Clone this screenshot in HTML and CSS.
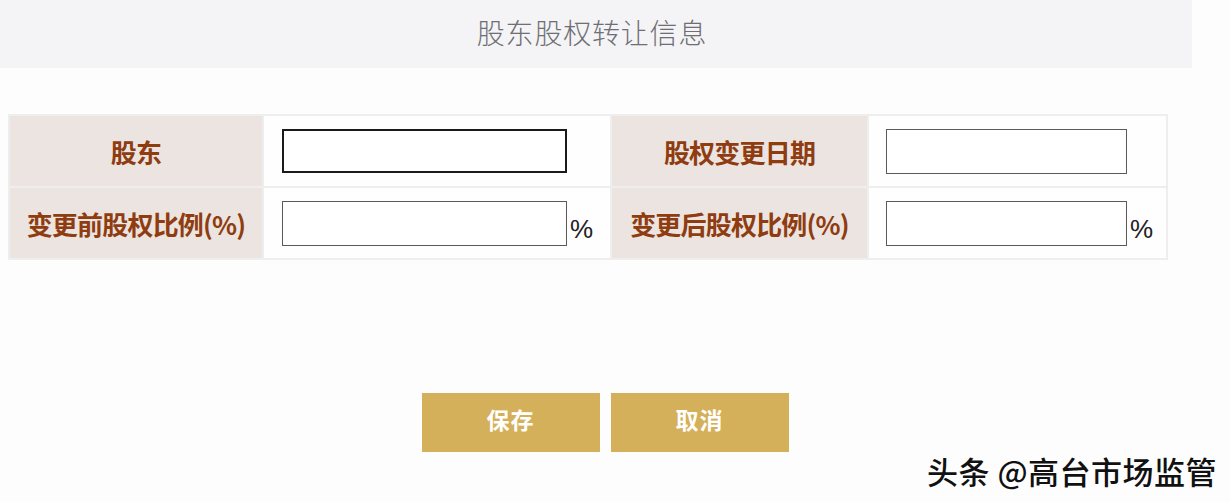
FILE: index.html
```html
<html>
<head>
  <meta charset="UTF-8">
  <meta name="viewport" content="width=device-width, initial-scale=1">
  <title>股东股权转让信息</title>
  <link rel="stylesheet" href="styles.css">
</head>
<body>
  <div class="page">
    <div class="title-bar">
      <h3>股东股权转让信息</h3>
    </div>

    <table class="info-table">
      <tr>
        <td class="label c1">股东</td>
        <td class="field c2"><input type="text" class="box focus"></td>
        <td class="label c3">股权变更日期</td>
        <td class="field c4"><input type="text" class="box short"></td>
      </tr>
      <tr>
        <td class="label">变更前股权比例(%)</td>
        <td class="field"><input type="text" class="box"><span class="unit">%</span></td>
        <td class="label">变更后股权比例(%)</td>
        <td class="field last"><input type="text" class="box short"><span class="unit">%</span></td>
      </tr>
    </table>

    <div class="actions">
      <button class="btn">保存</button>
      <button class="btn">取消</button>
    </div>
  </div>

  <!-- watermark over the screenshot -->
  <div class="watermark">头条 @高台市场监管</div>
</body>
</html>
```

FILE: styles.css
```css
body {
  margin: 0;
  padding: 0;
  background: #fdfdfd;
  font-family: "Noto Sans CJK SC", "Noto Sans", sans-serif;
  width: 1230px;
  height: 502px;
  overflow: hidden;
  position: relative;
}

.page {
  width: 1230px;
}

.title-bar {
  width: 1192px;
  height: 68px;
  background: #f4f4f6;
  display: flex;
  align-items: center;
  justify-content: center;
}
.title-bar h3 {
  margin: 0;
  padding: 0 8px 4px 0;
  font-size: 28px;
  font-weight: 300;
  color: #6e6e74;
  letter-spacing: 0.8px;
}

.info-table {
  width: 1160px;
  margin: 46px 0 0 8px;
  border-collapse: separate;
  border-spacing: 2px;
  background: #eeeeee;
  table-layout: fixed;
}
.info-table td {
  height: 70px;
  padding: 0;
  box-sizing: border-box;
}
.c1 { width: 252px; }
.c2 { width: 346px; }
.c3 { width: 255px; }
.c4 { width: 297px; }

.label {
  background: #ebe4e0;
  color: #8e3c10;
  font-size: 26px;
  font-weight: bold;
  text-align: center;
  letter-spacing: -0.8px;
}
.field {
  background: #fefefe;
  padding-left: 18px !important;
  white-space: nowrap;
}
.c4, .last {
  padding-left: 17px !important;
}

.box {
  width: 285px;
  height: 45px;
  box-sizing: border-box;
  border: 1.5px solid #5a5a5a;
  background: #fff;
  vertical-align: middle;
  margin: 0;
  padding: 0 6px;
  outline: none;
}
.box.focus {
  border: 2px solid #1a1a1a;
  height: 44px;
}
.box.short {
  width: 241px;
}
.unit {
  display: inline-block;
  vertical-align: middle;
  margin: 12px 0 0 3px;
  font-family: "Liberation Sans", Arial, sans-serif;
  font-size: 26px;
  color: #222;
}

.actions {
  width: 1210px;
  margin-top: 133px;
  display: flex;
  justify-content: center;
  gap: 11px;
}
.btn {
  width: 178px;
  height: 59px;
  border: none;
  background: #d5b05b;
  color: #ffffff;
  font-family: "Noto Sans CJK SC", sans-serif;
  font-size: 23px;
  font-weight: bold;
  letter-spacing: 1px;
  padding: 0 0 8px 0;
}

.watermark {
  position: absolute;
  left: 927px;
  top: 448px;
  font-size: 31px;
  font-weight: 500;
  color: #111;
  letter-spacing: 0.5px;
  text-shadow: 1px 1px 0 #fff, -1px -1px 0 #fff;
  white-space: nowrap;
}
```
